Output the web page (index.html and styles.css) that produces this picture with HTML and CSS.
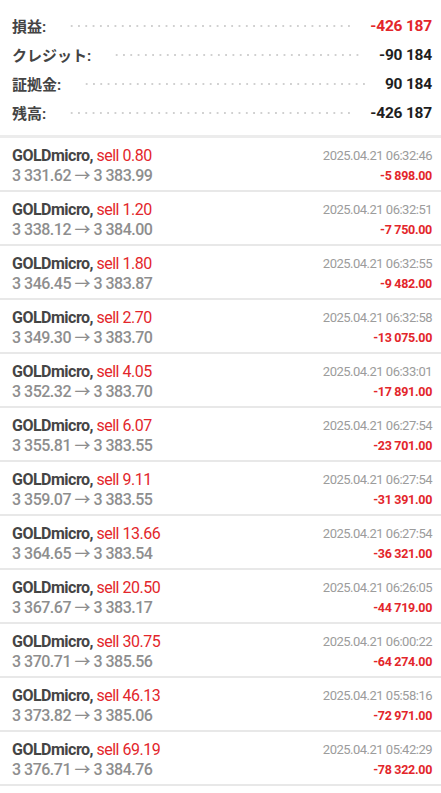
FILE: index.html
```html
<!DOCTYPE html>
<html lang="ja">
<head>
    <meta charset="UTF-8">
    <meta name="viewport" content="width=device-width, initial-scale=1.0">
    <title>履歴</title>
    <link rel="stylesheet" href="styles.css">
</head>
<body>
    <!-- account summary -->
    <div class="summary">
        <div class="sum-row">
            <span class="sum-label">損益:</span>
            <span class="leader"></span>
            <span class="sum-value loss">-426 187</span>
        </div>
        <div class="sum-row">
            <span class="sum-label">クレジット:</span>
            <span class="leader"></span>
            <span class="sum-value">-90 184</span>
        </div>
        <div class="sum-row">
            <span class="sum-label">証拠金:</span>
            <span class="leader"></span>
            <span class="sum-value">90 184</span>
        </div>
        <div class="sum-row">
            <span class="sum-label">残高:</span>
            <span class="leader"></span>
            <span class="sum-value">-426 187</span>
        </div>
    </div>

    <!-- deals list -->
    <div class="deals">
        <div class="deal">
            <div class="deal-left">
                <div class="deal-title"><b>GOLDmicro,</b> <span class="loss">sell 0.80</span></div>
                <div class="deal-price">3 331.62 → 3 383.99</div>
            </div>
            <div class="deal-right">
                <div class="deal-time">2025.04.21 06:32:46</div>
                <div class="deal-profit loss">-5 898.00</div>
            </div>
        </div>
        <div class="deal">
            <div class="deal-left">
                <div class="deal-title"><b>GOLDmicro,</b> <span class="loss">sell 1.20</span></div>
                <div class="deal-price">3 338.12 → 3 384.00</div>
            </div>
            <div class="deal-right">
                <div class="deal-time">2025.04.21 06:32:51</div>
                <div class="deal-profit loss">-7 750.00</div>
            </div>
        </div>
        <div class="deal">
            <div class="deal-left">
                <div class="deal-title"><b>GOLDmicro,</b> <span class="loss">sell 1.80</span></div>
                <div class="deal-price">3 346.45 → 3 383.87</div>
            </div>
            <div class="deal-right">
                <div class="deal-time">2025.04.21 06:32:55</div>
                <div class="deal-profit loss">-9 482.00</div>
            </div>
        </div>
        <div class="deal">
            <div class="deal-left">
                <div class="deal-title"><b>GOLDmicro,</b> <span class="loss">sell 2.70</span></div>
                <div class="deal-price">3 349.30 → 3 383.70</div>
            </div>
            <div class="deal-right">
                <div class="deal-time">2025.04.21 06:32:58</div>
                <div class="deal-profit loss">-13 075.00</div>
            </div>
        </div>
        <div class="deal">
            <div class="deal-left">
                <div class="deal-title"><b>GOLDmicro,</b> <span class="loss">sell 4.05</span></div>
                <div class="deal-price">3 352.32 → 3 383.70</div>
            </div>
            <div class="deal-right">
                <div class="deal-time">2025.04.21 06:33:01</div>
                <div class="deal-profit loss">-17 891.00</div>
            </div>
        </div>
        <div class="deal">
            <div class="deal-left">
                <div class="deal-title"><b>GOLDmicro,</b> <span class="loss">sell 6.07</span></div>
                <div class="deal-price">3 355.81 → 3 383.55</div>
            </div>
            <div class="deal-right">
                <div class="deal-time">2025.04.21 06:27:54</div>
                <div class="deal-profit loss">-23 701.00</div>
            </div>
        </div>
        <div class="deal">
            <div class="deal-left">
                <div class="deal-title"><b>GOLDmicro,</b> <span class="loss">sell 9.11</span></div>
                <div class="deal-price">3 359.07 → 3 383.55</div>
            </div>
            <div class="deal-right">
                <div class="deal-time">2025.04.21 06:27:54</div>
                <div class="deal-profit loss">-31 391.00</div>
            </div>
        </div>
        <div class="deal">
            <div class="deal-left">
                <div class="deal-title"><b>GOLDmicro,</b> <span class="loss">sell 13.66</span></div>
                <div class="deal-price">3 364.65 → 3 383.54</div>
            </div>
            <div class="deal-right">
                <div class="deal-time">2025.04.21 06:27:54</div>
                <div class="deal-profit loss">-36 321.00</div>
            </div>
        </div>
        <div class="deal">
            <div class="deal-left">
                <div class="deal-title"><b>GOLDmicro,</b> <span class="loss">sell 20.50</span></div>
                <div class="deal-price">3 367.67 → 3 383.17</div>
            </div>
            <div class="deal-right">
                <div class="deal-time">2025.04.21 06:26:05</div>
                <div class="deal-profit loss">-44 719.00</div>
            </div>
        </div>
        <div class="deal">
            <div class="deal-left">
                <div class="deal-title"><b>GOLDmicro,</b> <span class="loss">sell 30.75</span></div>
                <div class="deal-price">3 370.71 → 3 385.56</div>
            </div>
            <div class="deal-right">
                <div class="deal-time">2025.04.21 06:00:22</div>
                <div class="deal-profit loss">-64 274.00</div>
            </div>
        </div>
        <div class="deal">
            <div class="deal-left">
                <div class="deal-title"><b>GOLDmicro,</b> <span class="loss">sell 46.13</span></div>
                <div class="deal-price">3 373.82 → 3 385.06</div>
            </div>
            <div class="deal-right">
                <div class="deal-time">2025.04.21 05:58:16</div>
                <div class="deal-profit loss">-72 971.00</div>
            </div>
        </div>
        <div class="deal">
            <div class="deal-left">
                <div class="deal-title"><b>GOLDmicro,</b> <span class="loss">sell 69.19</span></div>
                <div class="deal-price">3 376.71 → 3 384.76</div>
            </div>
            <div class="deal-right">
                <div class="deal-time">2025.04.21 05:42:29</div>
                <div class="deal-profit loss">-78 322.00</div>
            </div>
        </div>
    </div>
</body>
</html>
```

FILE: styles.css
```css
body {
    margin: 0;
    background-color: #ffffff;
    font-family: Roboto, "Noto Sans CJK JP", sans-serif;
    color: #222222;
}

.loss {
    color: #e3262b;
}

/* summary block on top */

.summary {
    padding: 11px 9px 8px 12px;
    border-bottom: 3px solid #ececec;
}

.sum-row {
    display: flex;
    align-items: center;
    height: 29px;
}

.sum-label {
    font-size: 15px;
    font-weight: bold;
    color: #444444;
}

.leader {
    flex: 1;
    height: 2px;
    margin: 0 18px 0 22px;
    background-image: radial-gradient(circle, #d0d0d0 0.9px, transparent 1.1px);
    background-size: 7.3px 2px;
}

.sum-value {
    font-size: 15.5px;
    font-weight: bold;
    letter-spacing: -0.2px;
    color: #1e1e1e;
}

.sum-value.loss {
    color: #e3262b;
}

/* deals */

.deal {
    display: flex;
    justify-content: space-between;
    align-items: flex-start;
    height: 44px;
    padding: 8px 9px 0 12px;
    border-bottom: 2px solid #e8e8e8;
}

.deal-right {
    display: flex;
    flex-direction: column;
    align-items: flex-end;
}

.deal-title {
    font-size: 16px;
    line-height: 20px;
    letter-spacing: -0.5px;
    color: #e3262b;
}

.deal-title b {
    color: #454545;
}

.deal-price {
    font-size: 16px;
    line-height: 20px;
    letter-spacing: -0.5px;
    font-weight: 500;
    color: #8e8e8e;
}

.deal-time {
    font-size: 13px;
    line-height: 20px;
    letter-spacing: -0.5px;
    color: #9c9c9c;
}

.deal-profit {
    font-size: 12.5px;
    line-height: 20px;
    letter-spacing: -0.3px;
    font-weight: bold;
}
```
